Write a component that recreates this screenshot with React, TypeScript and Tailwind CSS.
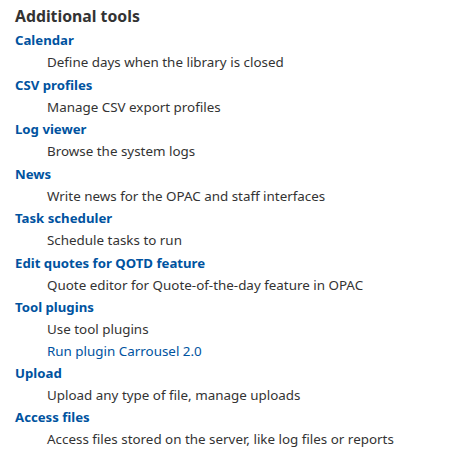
import React from 'react';

type Tool = {
  label: string;
  desc: string[];
  links?: string[];
};

const tools: Tool[] = [
  { label: 'Calendar', desc: ['Define days when the library is closed'] },
  { label: 'CSV profiles', desc: ['Manage CSV export profiles'] },
  { label: 'Log viewer', desc: ['Browse the system logs'] },
  { label: 'News', desc: ['Write news for the OPAC and staff interfaces'] },
  { label: 'Task scheduler', desc: ['Schedule tasks to run'] },
  { label: 'Edit quotes for QOTD feature', desc: ['Quote editor for Quote-of-the-day feature in OPAC'] },
  { label: 'Tool plugins', desc: ['Use tool plugins'], links: ['Run plugin Carrousel 2.0'] },
  { label: 'Upload', desc: ['Upload any type of file, manage uploads'] },
  { label: 'Access files', desc: ['Access files stored on the server, like log files or reports'] },
];

export default function App() {
  return (
    <div className="bg-white px-[15px] pt-[5px] text-[#333333] font-['Noto_Sans',sans-serif]">
      <h3 className="text-[15.8px] font-bold leading-[22px] mb-[2px]">Additional tools</h3>
      <dl>
        {tools.map((t) => (
          <React.Fragment key={t.label}>
            <dt className="text-[13.2px] font-bold leading-[23px] text-[#0053a0]">
              <a href="#">{t.label}</a>
            </dt>
            {t.desc.map((d) => (
              <dd key={d} className="ml-8 text-[13.4px] leading-[21px] mb-[0.5px]">
                {d}
              </dd>
            ))}
            {t.links?.map((l) => (
              <dd key={l} className="ml-8 text-[13.4px] leading-[21px] text-[#0053a0]">
                <a href="#">{l}</a>
              </dd>
            ))}
          </React.Fragment>
        ))}
      </dl>
    </div>
  );
}
